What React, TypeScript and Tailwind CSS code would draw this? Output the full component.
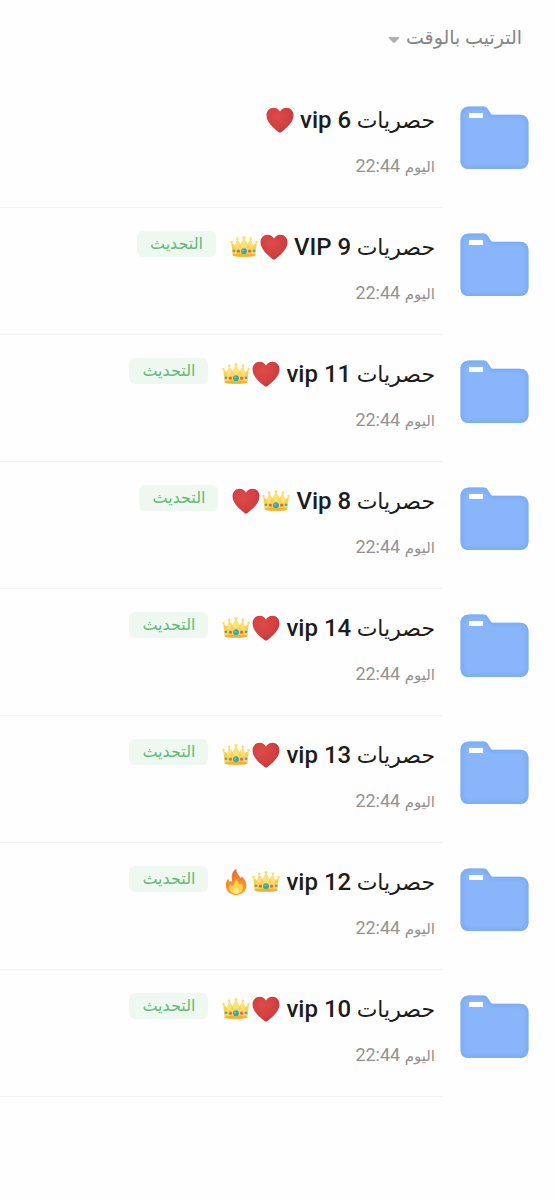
import { useId } from "react";

type Emoji = "heart" | "crown" | "fire";

interface Folder {
  id: number;
  name: string;
  emojis: Emoji[];
  updated: boolean;
}

const FOLDERS: Folder[] = [
  { id: 1, name: "vip 6", emojis: ["heart"], updated: false },
  { id: 2, name: "VIP 9", emojis: ["heart", "crown"], updated: true },
  { id: 3, name: "vip 11", emojis: ["heart", "crown"], updated: true },
  { id: 4, name: "Vip 8", emojis: ["crown", "heart"], updated: true },
  { id: 5, name: "vip 14", emojis: ["heart", "crown"], updated: true },
  { id: 6, name: "vip 13", emojis: ["heart", "crown"], updated: true },
  { id: 7, name: "vip 12", emojis: ["crown", "fire"], updated: true },
  { id: 8, name: "vip 10", emojis: ["heart", "crown"], updated: true },
];

const FolderIcon = () => {
  const id = useId();
  const shape =
    "M9 0.5H23.5C25.5 0.5 26.8 1.3 27.8 3L30.5 7.2C31.2 8.3 32 8.7 33.3 8.7H60C65 8.7 68.5 12 68.5 17V54.5C68.5 59.5 65 63 60 63H8.5C3.5 63 0.5 59.5 0.5 54.5V9C0.5 4 4 0.5 9 0.5Z";
  return (
    <svg viewBox="0 0 69 64" className="h-16 w-[69px] shrink-0" aria-hidden="true">
      <defs>
        <clipPath id={`${id}-clip`}>
          <path d={shape} />
        </clipPath>
        <filter id={`${id}-soft`} x="-10%" y="-10%" width="120%" height="120%">
          <feGaussianBlur stdDeviation="2" />
        </filter>
      </defs>
      <path d={shape} fill="#89b6fa" />
      <g clipPath={`url(#${id}-clip)`}>
        <path d={shape} fill="none" stroke="#78a8ee" strokeWidth="4" filter={`url(#${id}-soft)`} />
      </g>
      <rect x="9" y="7" width="14" height="5" fill="#fff" />
    </svg>
  );
};

const HeartIcon = () => {
  const id = useId();
  return (
    <svg viewBox="0 0 28 28" className="size-7" role="img" aria-label="❤️">
      <defs>
        <radialGradient id={id} cx="0.4" cy="0.35" r="0.75">
          <stop offset="0" stopColor="#dc4a4a" />
          <stop offset="0.65" stopColor="#d13f40" />
          <stop offset="1" stopColor="#b83435" />
        </radialGradient>
      </defs>
      <path
        d="M14 26.6C13.5 26.6 13 26.3 12.5 25.9C9.8 23.7 0.5 17.2 0.5 9.2C0.5 4.9 3.5 1.7 7.5 1.7C10.4 1.7 12.8 3.2 14 5.6C15.2 3.2 17.6 1.7 20.5 1.7C24.5 1.7 27.5 4.9 27.5 9.2C27.5 17.2 18.2 23.7 15.5 25.9C15 26.3 14.5 26.6 14 26.6Z"
        fill={`url(#${id})`}
      />
    </svg>
  );
};

const CrownIcon = () => (
  <svg viewBox="0 0 28 28" className="size-7" role="img" aria-label="👑">
    <path
      d="M2.8 22.8L1.2 9.6L5 12.4L7.2 6.4L10.6 11.2L14 5L17.4 11.2L20.8 6.4L23 12.4L26.8 9.6L25.2 22.8C21.5 24.2 6.5 24.2 2.8 22.8Z"
      fill="#fbcf4a"
    />
    <path
      d="M10.6 11.2L14 5L17.4 11.2L16.4 14.6H11.6ZM5 12.4L7.2 6.4L9.8 10.2L8.6 14.8L5.4 15.2ZM23 12.4L20.8 6.4L18.2 10.2L19.4 14.8L22.6 15.2Z"
      fill="#fde07a"
    />
    <path d="M2 15.9C7 14.2 21 14.2 26 15.9L25.4 20.8C20 19.5 8 19.5 2.6 20.8Z" fill="#fcd85e" />
    <path d="M2.7 21.6C8 20.6 20 20.6 25.3 21.6L25.2 22.8C20 24.2 8 24.2 2.8 22.8Z" fill="#f1b138" />
    <g fill="#fddc68">
      <circle cx="1.5" cy="9" r="1.3" />
      <circle cx="7.2" cy="5.8" r="1.4" />
      <circle cx="14" cy="4.5" r="1.6" />
      <circle cx="20.8" cy="5.8" r="1.4" />
      <circle cx="26.5" cy="9" r="1.3" />
    </g>
    <circle cx="14" cy="18.2" r="2.9" fill="#34aaa5" />
    <circle cx="13.4" cy="17.5" r="1" fill="#66c8c4" />
    <circle cx="8.4" cy="18.2" r="1.6" fill="#e8644a" />
    <circle cx="19.6" cy="18.2" r="1.6" fill="#e8644a" />
    <circle cx="4" cy="17.8" r="1.4" fill="#3fb0ac" />
    <circle cx="24" cy="17.8" r="1.4" fill="#3fb0ac" />
  </svg>
);

const FireIcon = () => {
  const id = useId();
  return (
    <svg viewBox="0 0 28 28" className="size-7" role="img" aria-label="🔥">
      <defs>
        <linearGradient id={id} x1="0" y1="0" x2="0" y2="1">
          <stop offset="0" stopColor="#ea6a2a" />
          <stop offset="0.5" stopColor="#f58a30" />
          <stop offset="1" stopColor="#fba03a" />
        </linearGradient>
      </defs>
      <path
        d="M14.5 0.8C13.9 4.3 16.2 6.7 18.2 9.4C18.9 10.3 19.8 9.8 19.5 8.3C22.3 10.5 24.4 13.7 24.4 17.5C24.4 23 20 27 14.2 27C8 27 3.8 22.9 3.8 17.4C3.8 14.5 4.9 12.1 6.4 10.4C6.3 12.2 7.2 13.5 8.6 13.6C10 13.7 10.2 12.3 9.9 10.4C9.2 6.3 11 2.7 14.5 0.8Z"
        fill={`url(#${id})`}
      />
      <path
        d="M15.3 10.6C15 13 16 14.4 17.2 16C17.8 16.8 18.7 16.5 18.9 15.2C20.3 16.4 21 18 21 19.8C21 23.4 18.1 25.9 14.3 25.9C10.2 25.9 7.2 23.4 7.2 19.8C7.2 18.5 7.6 17.4 8.3 16.6C9 18 10.5 18.3 11.5 17.1C13 15.3 12.1 12.7 15.3 10.6Z"
        fill="#fdd34a"
      />
      <path
        d="M14.5 18.2C14.7 20 17 20.8 17 23C17 24.7 15.8 25.7 14.2 25.7C12.4 25.7 11.2 24.6 11.2 22.9C11.2 21 13.2 20.2 14.5 18.2Z"
        fill="#fbe78b"
      />
    </svg>
  );
};

const EMOJI_ICONS = {
  heart: HeartIcon,
  crown: CrownIcon,
  fire: FireIcon,
};

const FolderRow = ({ folder }: { folder: Folder }) => {
  return (
    <li>
      <a href="#" className="flex gap-[18px] pr-[25px]">
        <div className="flex items-start pt-[26px]">
          <FolderIcon />
        </div>
        <div className="min-w-0 flex-1 border-b border-[#f2f2f2] pb-7 pr-[7px] pt-6">
          <div className="flex h-8 items-center">
            <h2 className="whitespace-nowrap text-2xl text-[#1c1c1c]">
              <span className="text-[22px]">حصريات </span>
              <span className="font-medium">{folder.name}</span>
            </h2>
            <span className="mr-1.5 flex gap-0.5">
              {folder.emojis.map((emoji) => {
                const Icon = EMOJI_ICONS[emoji];
                return <Icon key={emoji} />;
              })}
            </span>
            {folder.updated && (
              <span className="mr-3.5 flex h-[26px] w-[79px] items-center justify-center self-start rounded-md bg-[#eef8f1] text-base text-[#62b877]">
                التحديث
              </span>
            )}
          </div>
          <p className="mt-[18px] text-lg leading-6 text-[#929292]">
            <span className="text-[15px]">اليوم</span> 22:44
          </p>
        </div>
      </a>
    </li>
  );
};

export default function App() {
  return (
    <main
      dir="rtl"
      lang="ar"
      className="min-h-screen bg-[#fefefe] font-[Roboto,'DejaVu_Sans',sans-serif]"
    >
      <div className="flex h-20 items-start px-8 pt-6">
        <button type="button" className="flex items-center gap-1.5 text-[19px] leading-7 text-[#858585]">
          الترتيب بالوقت
          <svg viewBox="0 0 12 8" className="mt-1 h-2 w-3" aria-hidden="true">
            <path d="M1.5 1H10.5C11.4 1 11.6 1.9 11 2.5L7 6.6C6.4 7.2 5.6 7.2 5 6.6L1 2.5C0.4 1.9 0.6 1 1.5 1Z" fill="#b0b0b0" />
          </svg>
        </button>
      </div>
      <ul className="-space-y-px">
        {FOLDERS.map((folder) => (
          <FolderRow key={folder.id} folder={folder} />
        ))}
      </ul>
    </main>
  );
}
